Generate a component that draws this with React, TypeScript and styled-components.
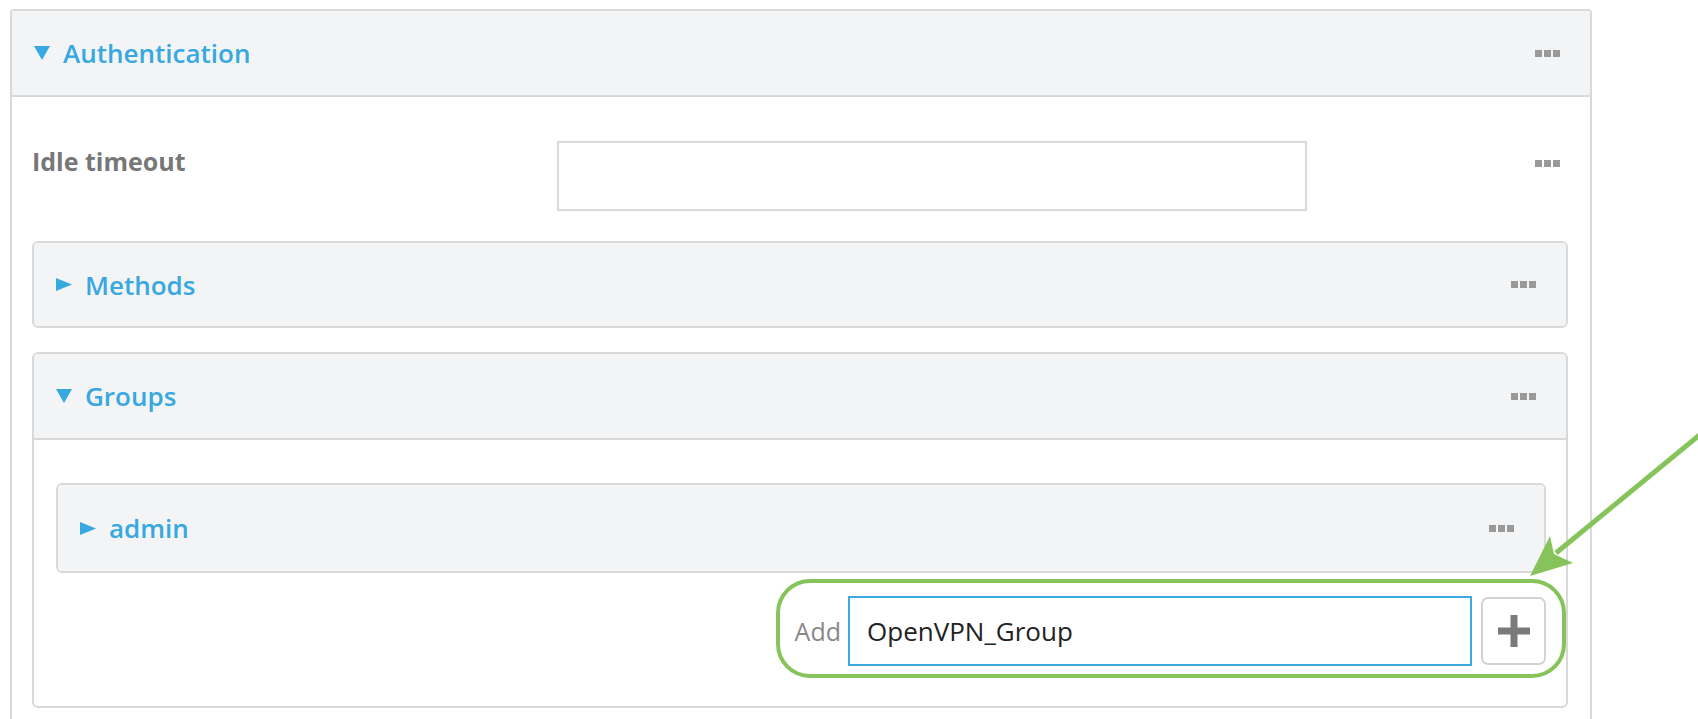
import styled, { createGlobalStyle } from "styled-components";

const GlobalStyle = createGlobalStyle`
  body {
    margin: 0;
    background: #fff;
    font-family: "Open Sans", "Liberation Sans", sans-serif;
  }
`;

const Page = styled.div`
  position: relative;
  box-sizing: border-box;
  height: 719px;
  overflow: hidden;
  padding: 9px 0 0 10px;
`;

const Panel = styled.section<{ $outer?: boolean }>`
  box-sizing: border-box;
  width: ${(p) => (p.$outer ? "1582px" : "auto")};
  min-height: ${(p) => (p.$outer ? "760px" : "0")};
  border: 2px solid #d9d9d9;
  border-radius: ${(p) => (p.$outer ? "4px" : "6px")};
  background: #fff;
  overflow: hidden;
`;

const Header = styled.div<{ $open?: boolean; $h?: number }>`
  display: flex;
  align-items: center;
  justify-content: space-between;
  height: ${(p) => p.$h ?? 84}px;
  padding: 0 30px 0 22px;
  background: #f3f4f6;
  border-bottom: ${(p) => (p.$open ? "2px solid #d9d9d9" : "none")};
`;

const Title = styled.div`
  display: flex;
  align-items: center;
  gap: 13px;
  color: #37a8e0;
  font-size: 26px;
  font-weight: 600;
`;

const Dots = styled.span`
  display: inline-flex;
  gap: 2px;
  span {
    width: 7px;
    height: 7px;
    background: #999;
  }
`;

const Body = styled.div<{ $pad: string }>`
  padding: ${(p) => p.$pad};
`;

const FieldRow = styled.div`
  display: flex;
  align-items: flex-start;
  padding-right: 8px;
`;

const Label = styled.div`
  width: 525px;
  color: #777;
  font-size: 25px;
  font-weight: 700;
  line-height: 36px;
  margin-top: 2px;
`;

const TextBox = styled.div<{ $w: number; $active?: boolean }>`
  box-sizing: border-box;
  display: flex;
  align-items: center;
  width: ${(p) => p.$w}px;
  height: 70px;
  padding: 0 17px;
  border: 2px solid ${(p) => (p.$active ? "#3aaae1" : "#d9d9d9")};
  color: #222;
  font-size: 26px;
`;

const RowDots = styled.div`
  display: flex;
  margin-left: auto;
  margin-top: 19px;
`;

const Stack = styled.div<{ $gap: number }>`
  margin-top: ${(p) => p.$gap}px;
`;

const AddWrap = styled.div`
  display: flex;
  justify-content: flex-end;
  margin-top: 22px;
`;

const AddRow = styled.div`
  position: relative;
  display: flex;
  align-items: center;
  height: 71px;
`;

const AddLabel = styled.span`
  color: #888;
  font-size: 25px;
  margin-right: 7px;
`;

const PlusButton = styled.button`
  box-sizing: border-box;
  display: flex;
  align-items: center;
  justify-content: center;
  width: 65px;
  height: 68px;
  margin-left: 9px;
  padding: 0;
  border: 2px solid #d3d3d3;
  border-radius: 7px;
  background: #fff;
`;

const Highlight = styled.div`
  position: absolute;
  top: -16px;
  bottom: -12px;
  left: -19px;
  right: -20px;
  border: 4px solid #86c45b;
  border-radius: 34px;
  pointer-events: none;
`;

const ArrowLayer = styled.svg`
  position: absolute;
  top: 0;
  left: 0;
  pointer-events: none;
`;

const Caret = ({ open }: { open?: boolean }) =>
  open ? (
    <svg width="16" height="14" viewBox="0 0 16 14">
      <polygon points="0,0 16,0 8,14" fill="#37a8e0" />
    </svg>
  ) : (
    <svg width="16" height="13" viewBox="0 0 16 13">
      <polygon points="0,0 16,6.5 0,13" fill="#37a8e0" />
    </svg>
  );

const More = () => (
  <Dots>
    <span />
    <span />
    <span />
  </Dots>
);

const SectionHeader = ({ title, open, h }: { title: string; open?: boolean; h?: number }) => (
  <Header $open={open} $h={h}>
    <Title>
      <Caret open={open} />
      {title}
    </Title>
    <More />
  </Header>
);

export default function App() {
  return (
    <>
      <GlobalStyle />
      <Page>
        <Panel $outer>
          <SectionHeader title="Authentication" open />
          <Body $pad="44px 22px 0 20px">
            <FieldRow>
              <Label>Idle timeout</Label>
              <TextBox $w={750} />
              <RowDots>
                <More />
              </RowDots>
            </FieldRow>
            <Stack $gap={30}>
              <Panel>
                <SectionHeader title="Methods" h={83} />
              </Panel>
            </Stack>
            <Stack $gap={24}>
              <Panel>
                <SectionHeader title="Groups" open />
                <Body $pad="43px 20px 40px 22px">
                  <Panel>
                    <SectionHeader title="admin" h={86} />
                  </Panel>
                  <AddWrap>
                    <AddRow>
                      <AddLabel>Add</AddLabel>
                      <TextBox $w={624} $active>
                        OpenVPN_Group
                      </TextBox>
                      <PlusButton>
                        <svg width="32" height="32" viewBox="0 0 32 32">
                          <rect x="0" y="12.5" width="32" height="7" fill="#7a7a7a" />
                          <rect x="12.5" y="0" width="7" height="32" fill="#7a7a7a" />
                        </svg>
                      </PlusButton>
                      <Highlight />
                    </AddRow>
                  </AddWrap>
                </Body>
              </Panel>
            </Stack>
          </Body>
        </Panel>
        <ArrowLayer width="1698" height="719" viewBox="0 0 1698 719">
          <line x1="1702" y1="433" x2="1556" y2="553" stroke="#86c45b" strokeWidth="5" />
          <polygon points="1530,576 1550,536 1554,554 1573,563" fill="#86c45b" />
        </ArrowLayer>
      </Page>
    </>
  );
}
